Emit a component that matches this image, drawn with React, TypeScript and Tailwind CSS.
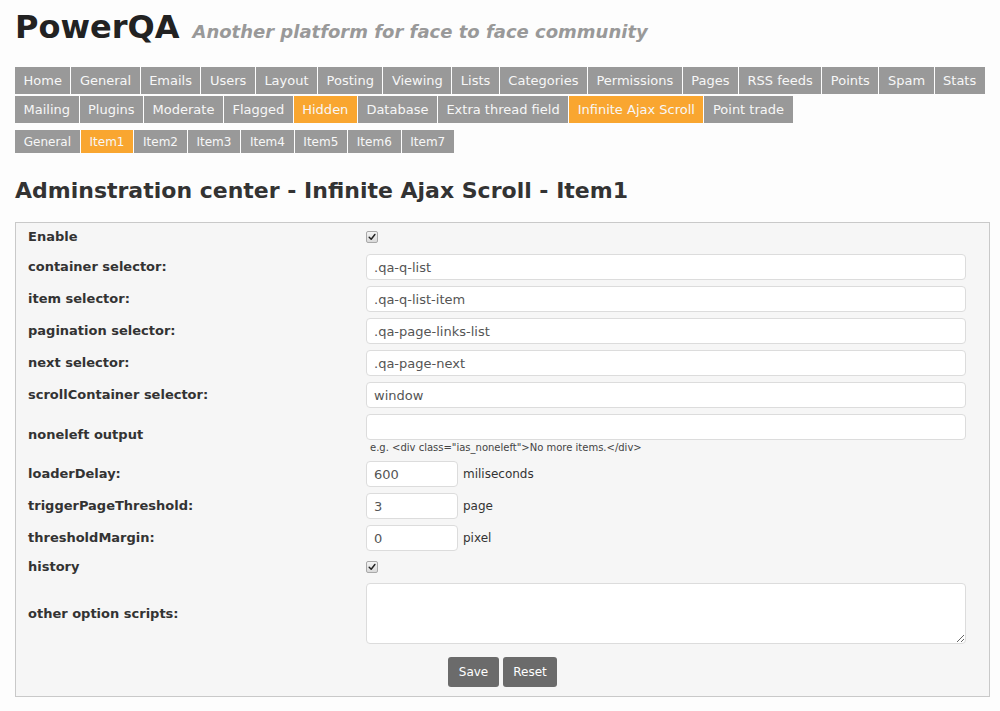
const MAIN_TABS: string[][] = [
  ['Home', 'General', 'Emails', 'Users', 'Layout', 'Posting', 'Viewing', 'Lists', 'Categories', 'Permissions', 'Pages', 'RSS feeds', 'Points', 'Spam', 'Stats'],
  ['Mailing', 'Plugins', 'Moderate', 'Flagged', 'Hidden', 'Database', 'Extra thread field', 'Infinite Ajax Scroll', 'Point trade'],
];
const ACTIVE_MAIN = ['Hidden', 'Infinite Ajax Scroll'];

const SUB_TABS = ['General', 'Item1', 'Item2', 'Item3', 'Item4', 'Item5', 'Item6', 'Item7'];

const TEXT_FIELDS = [
  { label: 'container selector:', value: '.qa-q-list' },
  { label: 'item selector:', value: '.qa-q-list-item' },
  { label: 'pagination selector:', value: '.qa-page-links-list' },
  { label: 'next selector:', value: '.qa-page-next' },
  { label: 'scrollContainer selector:', value: 'window' },
];

const NUMBER_FIELDS = [
  { label: 'loaderDelay:', value: '600', unit: 'miliseconds' },
  { label: 'triggerPageThreshold:', value: '3', unit: 'page' },
  { label: 'thresholdMargin:', value: '0', unit: 'pixel' },
];

function Checkbox() {
  return (
    <span className="w-[12px] h-[12px] rounded-[2px] border border-[#a9a9a9] bg-gradient-to-b from-[#f4f4f4] to-[#d9d9d9] flex items-center justify-center">
      <svg viewBox="0 0 10 10" className="w-[8px] h-[8px]">
        <path d="M1.5 5.2 L4 7.8 L8.6 1.8" fill="none" stroke="#222" strokeWidth="1.8" strokeLinecap="round" strokeLinejoin="round" />
      </svg>
    </span>
  );
}

function Label({ children }: { children: React.ReactNode }) {
  return <div className="w-[350px] shrink-0 pl-[12px] text-[13px] font-bold text-[#333]">{children}</div>;
}

export default function App() {
  return (
    <div className="min-h-[711px] bg-[#fdfdfd] pl-[15px] pr-[10px] pt-[9px] text-[#333] font-['DejaVu_Sans',sans-serif]">
      <div className="flex items-baseline gap-[13px]">
        <h1 className="text-[32px] leading-[37px] font-bold text-[#222]">PowerQA</h1>
        <span className="text-[18px] font-bold italic text-[#999]">Another platform for face to face community</span>
      </div>

      <nav className="mt-[21px] flex flex-col gap-[2px]">
        {MAIN_TABS.map((row, i) => (
          <div key={i} className="flex gap-[1px]">
            {row.map((tab) => (
              <span
                key={tab}
                className={`h-[27px] px-[8.5px] flex items-center text-[13px] text-[#f7f7f7] whitespace-nowrap ${
                  ACTIVE_MAIN.includes(tab) ? 'bg-[#f9a630]' : 'bg-[#999]'
                }`}
              >
                {tab}
              </span>
            ))}
          </div>
        ))}
      </nav>

      <div className="mt-[7px] flex gap-[1px]">
        {SUB_TABS.map((tab) => (
          <span
            key={tab}
            className={`h-[23px] px-[8.75px] flex items-center text-[12px] text-[#f7f7f7] ${tab === 'Item1' ? 'bg-[#f9a630]' : 'bg-[#999]'}`}
          >
            {tab}
          </span>
        ))}
      </div>

      <h2 className="mt-[25px] text-[22px] leading-[26px] font-bold text-[#333]">Adminstration center - Infinite Ajax Scroll - Item1</h2>

      <form className="mt-[18px] w-[975px] border border-[#c9c9c9] bg-[#f6f6f6]">
        <div className="h-[28px] flex items-center">
          <Label>Enable</Label>
          <Checkbox />
        </div>

        {TEXT_FIELDS.map((field) => (
          <div key={field.label} className="h-[32px] flex items-center">
            <Label>{field.label}</Label>
            <input
              readOnly
              value={field.value}
              className="w-[600px] h-[26px] rounded-[4px] border border-[#dcdcdc] bg-white px-[7px] text-[13px] text-[#555] outline-none"
            />
          </div>
        ))}

        <div className="flex items-center pt-[3px] pb-[3px]">
          <Label>noneleft output</Label>
          <div className="flex flex-col">
            <input readOnly value="" className="w-[600px] h-[26px] rounded-[4px] border border-[#dcdcdc] bg-white px-[7px] text-[13px] outline-none" />
            <span className="mt-[1px] pl-[4px] text-[10px] leading-[14px] text-[#444]">e.g. &lt;div class="ias_noneleft"&gt;No more items.&lt;/div&gt;</span>
          </div>
        </div>

        {NUMBER_FIELDS.map((field) => (
          <div key={field.label} className="h-[32px] flex items-center">
            <Label>{field.label}</Label>
            <input
              readOnly
              value={field.value}
              className="w-[92px] h-[26px] rounded-[4px] border border-[#dcdcdc] bg-white px-[7px] text-[13px] text-[#555] outline-none"
            />
            <span className="ml-[5px] text-[12px] text-[#333]">{field.unit}</span>
          </div>
        ))}

        <div className="h-[26px] flex items-center">
          <Label>history</Label>
          <Checkbox />
        </div>

        <div className="flex items-center py-[3px]">
          <Label>other option scripts:</Label>
          <textarea readOnly className="block w-[600px] h-[61px] rounded-[4px] border border-[#dcdcdc] bg-white px-[7px] text-[13px] outline-none" />
        </div>

        <div className="flex justify-center gap-[4px] pt-[10px] pb-[9px]">
          <button type="button" className="h-[30px] w-[51px] rounded-[3px] bg-[#6b6b6b] text-[12px] text-white">Save</button>
          <button type="button" className="h-[30px] w-[54px] rounded-[3px] bg-[#6b6b6b] text-[12px] text-white">Reset</button>
        </div>
      </form>
    </div>
  );
}
